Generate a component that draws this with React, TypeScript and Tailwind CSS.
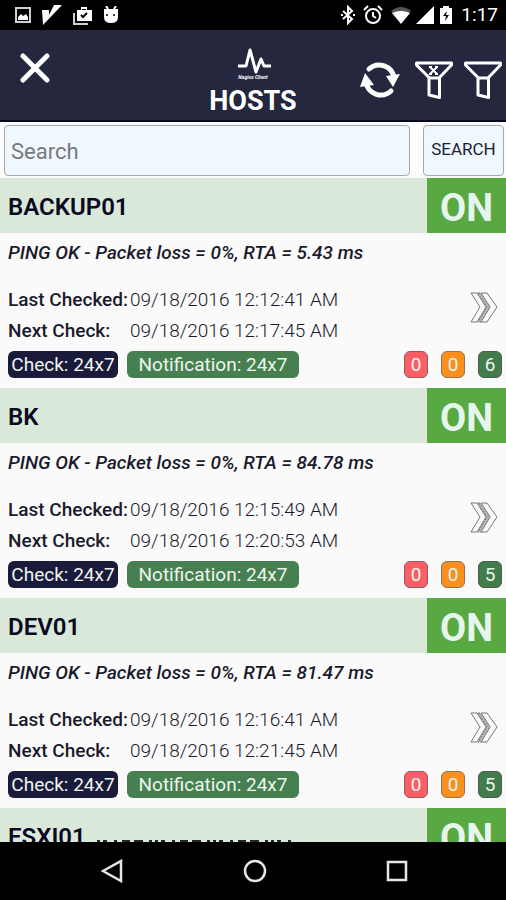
import { useState } from 'react';

interface Host {
  name: string;
  output: string;
  lastChecked: string;
  nextCheck: string;
  critical: number;
  warning: number;
  ok: number;
}

const hosts: Host[] = [
  {
    name: 'BACKUP01',
    output: 'PING OK - Packet loss = 0%, RTA = 5.43 ms',
    lastChecked: '09/18/2016 12:12:41 AM',
    nextCheck: '09/18/2016 12:17:45 AM',
    critical: 0,
    warning: 0,
    ok: 6,
  },
  {
    name: 'BK',
    output: 'PING OK - Packet loss = 0%, RTA = 84.78 ms',
    lastChecked: '09/18/2016 12:15:49 AM',
    nextCheck: '09/18/2016 12:20:53 AM',
    critical: 0,
    warning: 0,
    ok: 5,
  },
  {
    name: 'DEV01',
    output: 'PING OK - Packet loss = 0%, RTA = 81.47 ms',
    lastChecked: '09/18/2016 12:16:41 AM',
    nextCheck: '09/18/2016 12:21:45 AM',
    critical: 0,
    warning: 0,
    ok: 5,
  },
];

function StatusBar() {
  return (
    <div className="flex h-[30px] shrink-0 items-center justify-between bg-black pl-[14px] pr-2 text-white">
      <div className="flex items-center gap-[10px]">
        <svg className="h-[18px] w-[18px]" viewBox="0 0 18 18">
          <rect x="2" y="2" width="14" height="14" fill="none" stroke="#cfcfcf" strokeWidth="2" />
          <path d="M4 14v-3l3-3 2 2 3-2 2 3v3z" fill="#fff" />
        </svg>
        <svg className="h-5 w-5" viewBox="0 0 20 20" fill="#fff">
          <path d="M0 5h7v5L12 0h8L1 20z" />
        </svg>
        <svg className="h-5 w-5" viewBox="0 0 20 20">
          <path d="M2 8v11h14" fill="none" stroke="#cfcfcf" strokeWidth="2" />
          <path d="M5 5h4V2h6v3h5v11H5z" fill="#fff" />
          <path d="M10 4h4v1h-4z" />
          <path d="M9 10l2 2 4-4" fill="none" stroke="#000" strokeWidth="2" />
        </svg>
        <svg className="h-[18px] w-[18px]" viewBox="0 0 18 18">
          <path d="M4 0l2 3M14 0l-2 3" stroke="#fff" strokeWidth="2" />
          <path d="M2 3h14v8q0 6-7 6t-7-6z" fill="#fff" />
          <circle cx="5" cy="9" r="1" />
          <circle cx="12" cy="9" r="1" />
        </svg>
      </div>
      <div className="flex items-center gap-[3px]">
        <svg className="h-5 w-4" viewBox="0 0 16 20" fill="none" stroke="#fff" strokeWidth="2">
          <path d="M3 6l9 8-4 4V2l4 4-9 8" />
          <path d="M1 10h2M13 10h2" />
        </svg>
        <svg className="mx-1 h-5 w-5" viewBox="0 0 20 20" fill="none" stroke="#fff" strokeWidth="2">
          <circle cx="10" cy="11" r="7" />
          <path d="M10 7v4l3 2M1 5l4-4M19 5l-4-4" />
        </svg>
        <svg className="h-5 w-[22px]" viewBox="0 0 22 20">
          <path d="M1 6Q11 -2 21 6L11 18z" fill="#555" />
          <path d="M2 8q9-4 18 0l-9 11z" fill="#fff" />
        </svg>
        <svg className="h-5 w-5" viewBox="0 0 20 20">
          <path d="M19 1v18H1z" fill="#fff" />
        </svg>
        <svg className="h-5 w-4" viewBox="0 0 16 20">
          <path d="M2 3h3V1h6v2h3v16H2z" fill="#fff" />
          <path d="M9 6l-4 5h3l-1 5 4-6H8z" fill="#000" />
        </svg>
        <span className="ml-1 text-[19px] leading-6">1:17</span>
      </div>
    </div>
  );
}

function FunnelIcon({ cleared = false }: { cleared?: boolean }) {
  return (
    <svg className="h-10 w-[38px]" viewBox="0 0 38 40" fill="none" stroke="#fff" strokeWidth="3" strokeLinejoin="round">
      <path d="M1.500 3h35v2L24.500 17.500v20L14 35V17.500L1.500 5z" />
      <path d="M14 18h10.500" />
      {cleared && <path d="M15 7l7 7M22 7l-7 7M14 7h3M20 7h3M14 14h3M20 14h3" strokeWidth="2" />}
    </svg>
  );
}

function Header() {
  return (
    <header className="grid h-[92px] shrink-0 grid-cols-[1fr_auto_1fr] border-b-2 border-[#080724] bg-[#25273f] text-white">
      <button aria-label="Close" className="ml-5 mt-[23px] h-8 w-8">
        <svg className="h-8 w-8" viewBox="0 0 32 32" stroke="#fff" strokeWidth="5" strokeLinecap="round">
          <path d="M3 3l24 24M27 3L3 27" />
        </svg>
      </button>
      <div className="flex flex-col items-center pt-4">
        <svg className="h-7 w-9" viewBox="0 0 36 28" fill="none" stroke="#fff">
          <path d="M3 20h8l4-16 6 22 5-13 3 7h7" strokeWidth="3" strokeLinejoin="round" />
        </svg>
        <span className="text-[5px] font-bold italic leading-[6px]">Nagios Client</span>
        <h1 className="text-[27px] font-bold leading-[42px]">HOSTS</h1>
      </div>
      <div className="flex justify-end gap-[11px] pr-1 pt-[30px]">
        <button aria-label="Refresh" className="mr-1 h-10 w-10">
          <svg className="h-10 w-10" viewBox="0 0 40 40" fill="none" stroke="#fff" strokeWidth="5" strokeLinecap="round">
            <path d="M9 9a15 15 0 0 1 25 9" />
            <path d="M31 31A15 15 0 0 1 6 22" />
            <path d="M26 16l14-2-7 13zM0 27l5-14 9 12z" fill="#fff" stroke="none" />
          </svg>
        </button>
        <button aria-label="Clear filter" className="h-10 w-[38px]">
          <FunnelIcon cleared />
        </button>
        <button aria-label="Filter" className="h-10 w-[38px]">
          <FunnelIcon />
        </button>
      </div>
    </header>
  );
}

function SearchBar() {
  const [query, setQuery] = useState('');

  return (
    <form
      className="flex h-14 shrink-0 items-center gap-[13px] bg-[#fcfcfc] pl-1 pr-0.5"
      onSubmit={(e) => e.preventDefault()}
    >
      <input
        type="text"
        aria-label="Search"
        placeholder="Search"
        value={query}
        onChange={(e) => setQuery(e.target.value)}
        className="h-[51px] min-w-0 flex-1 rounded border border-[#a6a8ab] bg-[#f0f8ff] px-1.5 pt-0.5 text-[22px] text-[#0d0d2b] placeholder:text-[#77797c]"
      />
      <button className="h-[51px] w-[81px] rounded border border-[#a6a8ab] bg-[#f0f8ff] text-[17px] text-[#1d2033]">
        SEARCH
      </button>
    </form>
  );
}

function HostTitle({ name }: { name: string }) {
  return (
    <div className="flex h-[55px] bg-[#dae8da]">
      <h2 className="flex-1 pl-2 text-[24px] font-semibold leading-[58px] text-[#090a20]">{name}</h2>
      <span className="w-[79px] bg-[#58a942] text-center text-[38px] font-bold leading-[60px] text-[#e6f6ee]">ON</span>
    </div>
  );
}

function HostCard({ host }: { host: Host }) {
  return (
    <section>
      <HostTitle name={host.name} />
      <div className="h-[155px] bg-[#fafafa] pl-2 pr-1 text-[#1a1a2c]">
        <p className="pt-1 text-[19px] font-medium italic leading-8">{host.output}</p>
        <div className="flex items-start justify-between pt-[15px]">
          <dl className="grid grid-cols-[122px_auto] text-[19px] leading-[31px]">
            <dt className="whitespace-nowrap font-medium">Last Checked:</dt>
            <dd className="font-light">{host.lastChecked}</dd>
            <dt className="font-medium">Next Check:</dt>
            <dd className="font-light">{host.nextCheck}</dd>
          </dl>
          <a href="#services" aria-label={`${host.name} services`} className="mr-1 mt-2">
            <svg className="h-[31px] w-7" viewBox="0 0 28 31" fill="#fafafa" stroke="#77777a" strokeWidth="1">
              <path d="M1 1h6l9 14-9 15H1l9-15z" />
              <path d="M11 1h6l10 14-10 15h-6l9-15z" />
              <path d="M8 1h3l9 14-9 15H8l9-15z" fill="#b5b5b7" strokeDasharray="2 1" />
            </svg>
          </a>
        </div>
        <div className="flex gap-[9px] pt-[5px] text-[19px] leading-[27px] text-[#eef5ee]">
          <span className="w-[110px] rounded-md bg-[#1a1a3a] text-center">Check: 24x7</span>
          <span className="w-[172px] rounded-md bg-[#468050] text-center">Notification: 24x7</span>
          <div className="ml-auto flex gap-[13px]">
            <span className="w-6 rounded-md border border-[#8f5a60] bg-[#fb5f65] text-center leading-[25px]">{host.critical}</span>
            <span className="w-6 rounded-md border border-[#8f7450] bg-[#fb8f1d] text-center leading-[25px]">{host.warning}</span>
            <span className="w-6 rounded-md border border-[#4c5c4e] bg-[#417c4a] text-center leading-[25px]">{host.ok}</span>
          </div>
        </div>
      </div>
    </section>
  );
}

function NavBar() {
  return (
    <nav className="flex h-[58px] shrink-0 items-center justify-center gap-[118px] bg-black pl-1">
      <button aria-label="Back" className="h-6 w-6">
        <svg className="h-6 w-6" viewBox="0 0 24 24" fill="none" stroke="#e6e6e6" strokeWidth="2.500">
          <path d="M20 2v20L2 12z" />
        </svg>
      </button>
      <button aria-label="Home" className="h-6 w-6">
        <svg className="h-6 w-6" viewBox="0 0 24 24" fill="none" stroke="#e6e6e6" strokeWidth="2.500">
          <circle cx="12" cy="12" r="10" />
        </svg>
      </button>
      <button aria-label="Recent apps" className="h-6 w-6">
        <svg className="h-6 w-6" viewBox="0 0 24 24" fill="none" stroke="#e6e6e6" strokeWidth="2.500">
          <rect x="3" y="3" width="18" height="18" />
        </svg>
      </button>
    </nav>
  );
}

export default function App() {
  return (
    <div className="flex h-screen flex-col overflow-hidden bg-[#fafafa] font-['Roboto',sans-serif]">
      <StatusBar />
      <Header />
      <SearchBar />
      <main className="relative min-h-0 flex-1 overflow-hidden">
        {hosts.map((host) => (
          <HostCard key={host.name} host={host} />
        ))}
        <HostTitle name="ESXI01" />
        {/* top edge of the toast sliding in over the list */}
        <svg className="absolute bottom-0 left-[97px] h-0.5 w-[195px]" viewBox="0 0 195 2" stroke="#22252f" strokeWidth="2">
          <path d="M0 1h195" strokeDasharray="3 3 4 7 3 5 8 4 9 6 3 3" />
        </svg>
      </main>
      <NavBar />
    </div>
  );
}
